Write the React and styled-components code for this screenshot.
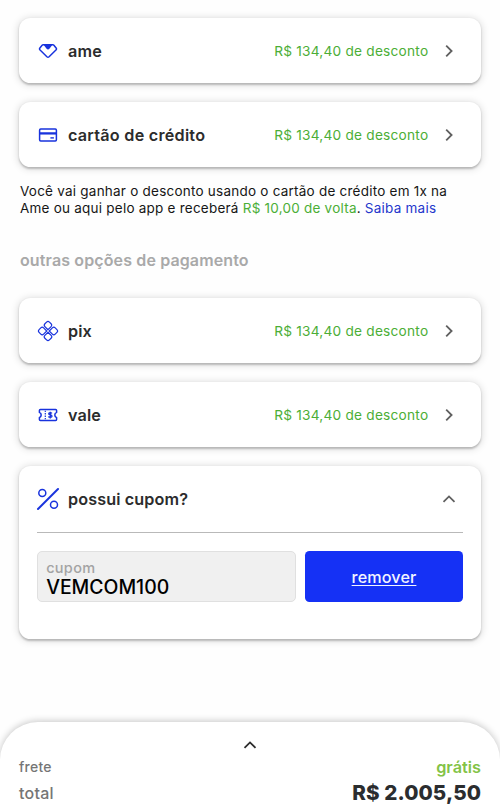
import React from 'react';
import styled, { createGlobalStyle } from 'styled-components';

const GlobalStyle = createGlobalStyle`
  *, *::before, *::after { box-sizing: border-box; }
  body {
    margin: 0;
    background: #fff;
    font-family: Inter, "Liberation Sans", sans-serif;
    color: #2c2c2c;
  }
`;

const Page = styled.div`
  display: flex;
  flex-direction: column;
  height: 807px;
  padding-top: 18px;
  overflow: hidden;
  background: #fefefe;
`;

const Content = styled.main`
  flex: 1;
  padding: 0 18.7px;
`;

const CardList = styled.div`
  display: flex;
  flex-direction: column;
  gap: 18.6px;
`;

const Card = styled.section`
  border-radius: 11.5px;
  background: #fff;
  box-shadow: 0 1.5px 2px rgba(0, 0, 0, 0.2), 0 1px 8px rgba(0, 0, 0, 0.18);
`;

const CouponCard = styled(Card)`
  height: 173.3px;
`;

const Row = styled.div`
  display: flex;
  align-items: center;
  height: 65.4px;
  padding: 0 25.7px 0 17.3px;
`;

const CouponHeader = styled(Row)`
  height: 66px;
`;

const IconSlot = styled.span`
  display: flex;
  justify-content: center;
  width: 24px;
  margin-right: 8px;
  color: #1933dd;
`;

const Label = styled.span`
  flex: 1;
  font-size: 16.2px;
  line-height: 20px;
  font-weight: 600;
  letter-spacing: ${(p) => p.$spacing || '0.12px'};
`;

const Discount = styled.span`
  margin-right: 13.3px;
  font-size: 13.7px;
  line-height: 20px;
  letter-spacing: 0.22px;
  color: #4bae36;
  white-space: nowrap;
`;

const Arrow = styled.svg`
  display: block;
  fill: none;
  stroke: ${(p) => p.$color || '#606060'};
  stroke-width: 1.8;
`;

const Notice = styled.p`
  margin: 16px 0 0 1.3px;
  font-size: 13.5px;
  line-height: 17px;
  letter-spacing: 0.23px;
  color: #161616;
  white-space: nowrap;
`;

const NoticeLine = styled.span`
  display: block;
`;

const Cashback = styled.span`
  color: #4bae36;
`;

const MoreLink = styled.a`
  color: #2437cc;
`;

const SectionTitle = styled.h2`
  margin: 33px 0 27.7px 1.3px;
  font-size: 16px;
  line-height: 20px;
  font-weight: 600;
  letter-spacing: 0.13px;
  color: #a9a9a9;
`;

const CouponForm = styled.div`
  display: flex;
  gap: 9px;
  margin: 0 18.3px;
  padding-top: 18.3px;
  border-top: 1px solid #b9b9b9;
`;

const CouponField = styled.div`
  display: flex;
  flex-direction: column;
  width: 259px;
  height: 51px;
  padding: 6.5px 8.2px 0;
  border: 1px solid #e0e0e0;
  border-radius: 5px;
  background: #f0f0f0;
`;

const FieldLabel = styled.span`
  font-size: 14.5px;
  line-height: 18px;
  font-weight: 500;
  letter-spacing: 0.3px;
  color: #a3a3a3;
`;

const FieldValue = styled.span`
  font-size: 19.4px;
  line-height: 20px;
  font-weight: 500;
  color: #000;
`;

const RemoveButton = styled.button`
  flex: 1;
  height: 51px;
  padding: 0;
  border: 0;
  border-radius: 4.5px;
  background: #1531f5;
  color: #f2f4ff;
  font: 500 16.2px/20px Inter, "Liberation Sans", sans-serif;
  letter-spacing: 0.1px;
  text-decoration: underline;
  text-decoration-thickness: 1.3px;
  text-underline-offset: 2px;
  text-decoration-skip-ink: none;
`;

const Summary = styled.footer`
  display: flex;
  flex-direction: column;
  height: 85.3px;
  padding: 16px 19px 0;
  border-radius: 38px 38px 0 0;
  background: #fff;
  box-shadow: 0 -1px 7px rgba(0, 0, 0, 0.22);
`;

const Handle = styled.div`
  display: flex;
  justify-content: center;
  height: 17px;
`;

const SummaryRow = styled.div`
  display: flex;
  align-items: center;
  justify-content: space-between;
  height: ${(p) => p.$height};
`;

const SummaryLabel = styled.span`
  font-size: ${(p) => p.$size};
  line-height: 20px;
  font-weight: 500;
  letter-spacing: 0.25px;
  color: #757575;
`;

const Shipping = styled.span`
  font-size: 16.3px;
  line-height: 20px;
  font-weight: 600;
  color: #83c346;
`;

const Total = styled.strong`
  font-size: 20.6px;
  line-height: 22px;
  font-weight: 800;
  letter-spacing: 0.08px;
  color: #2b2d2f;
`;

const AmeIcon = () => (
  <svg width="20" height="20" viewBox="0 0 20 20" fill="none">
    <path d="M5.2 3.8h9.6q.7 0 1.1.5l2.4 3q.6.8-.1 1.5l-7.1 7q-1.1 1-2.2 0l-7.1-7q-.7-.7-.1-1.5l2.4-3q.4-.5 1.1-.5Z" stroke="currentColor" strokeWidth="1.5" />
    <path d="M5.2 3.3h9.6L11.6 7.5q-1.6 1.9-3.2 0Z" fill="currentColor" />
  </svg>
);

const CardIcon = () => (
  <svg width="20" height="20" viewBox="0 0 20 20" fill="none">
    <rect x="1.6" y="4.1" width="16.8" height="11.8" rx="1.1" stroke="currentColor" strokeWidth="1.5" />
    <path d="M1.5 8.4h17" stroke="currentColor" strokeWidth="2.3" />
    <path d="M12.4 12.9h3.5" stroke="currentColor" strokeWidth="1.4" />
  </svg>
);

const PixIcon = () => (
  <svg width="22" height="22" viewBox="0 0 22 22" fill="none" stroke="currentColor" strokeWidth="1.2">
    <g transform="rotate(45 11 11)">
      <path d="M10.1 10.1H5.7q-2 0-2-2V5.7q0-2 2-2h2.4q2 0 2 2Z" />
      <path d="M11.9 10.1V5.7q0-2 2-2h2.4q2 0 2 2v2.4q0 2-2 2Z" />
      <path d="M10.1 11.9v4.4q0 2-2 2H5.7q-2 0-2-2v-2.4q0-2 2-2Z" />
      <path d="M11.9 11.9h4.4q2 0 2 2v2.4q0 2-2 2h-2.4q-2 0-2-2Z" />
    </g>
  </svg>
);

const VoucherIcon = () => (
  <svg width="20" height="20" viewBox="0 0 20 20" fill="none" stroke="currentColor">
    <path d="M2.4 4.6h15.2q1 0 1 1v1.8q-1.8.9-1.8 2.6t1.8 2.6v1.8q0 1-1 1H2.4q-1 0-1-1v-1.8Q3.2 11.7 3.2 10T1.4 7.4V5.6q0-1 1-1Z" strokeWidth="1.5" />
    <path d="M7.3 5.7v9" strokeWidth="1.2" strokeDasharray="1.4 1" />
    <path d="M14 8.4q-.6-.7-1.8-.7-1.5 0-1.5 1.1 0 .9 1.6 1.1 1.7.2 1.7 1.3 0 1.1-1.7 1.1-1.3 0-1.9-.8M12.3 6.7v6.7" strokeWidth="1.3" />
  </svg>
);

const PercentIcon = () => (
  <svg width="24" height="24" viewBox="0 0 24 24" fill="none" stroke="currentColor">
    <path d="M2 22 22 2" strokeWidth="2" strokeLinecap="round" />
    <circle cx="6.3" cy="6" r="3.5" strokeWidth="1.5" />
    <circle cx="18" cy="17.7" r="3.5" strokeWidth="1.5" />
  </svg>
);

const ChevronRight = () => (
  <Arrow width="14" height="14" viewBox="0 0 14 14">
    <path d="m4.2 1.6 5.4 5.4-5.4 5.4" />
  </Arrow>
);

const ChevronUp = ({ color }) => (
  <Arrow width="14" height="14" viewBox="0 0 14 14" $color={color}>
    <path d="M1.5 9.8 7 4.4l5.5 5.4" />
  </Arrow>
);

const PaymentOption = ({ icon, label, spacing }) => (
  <Card>
    <Row>
      <IconSlot>{icon}</IconSlot>
      <Label $spacing={spacing}>{label}</Label>
      <Discount>R$ 134,40 de desconto</Discount>
      <ChevronRight />
    </Row>
  </Card>
);

export default function App() {
  return (
    <>
      <GlobalStyle />
      <Page>
        <Content>
          <CardList>
            <PaymentOption icon={<AmeIcon />} label="ame" spacing="0.25px" />
            <PaymentOption icon={<CardIcon />} label="cartão de crédito" spacing="0.24px" />
          </CardList>
          <Notice>
            <NoticeLine>Você vai ganhar o desconto usando o cartão de crédito em 1x na</NoticeLine>
            <NoticeLine>
              Ame ou aqui pelo app e receberá <Cashback>R$ 10,00 de volta</Cashback>. <MoreLink>Saiba mais</MoreLink>
            </NoticeLine>
          </Notice>
          <SectionTitle>outras opções de pagamento</SectionTitle>
          <CardList>
            <PaymentOption icon={<PixIcon />} label="pix" />
            <PaymentOption icon={<VoucherIcon />} label="vale" />
            <CouponCard>
              <CouponHeader>
                <IconSlot><PercentIcon /></IconSlot>
                <Label>possui cupom?</Label>
                <ChevronUp />
              </CouponHeader>
              <CouponForm>
                <CouponField>
                  <FieldLabel>cupom</FieldLabel>
                  <FieldValue>VEMCOM100</FieldValue>
                </CouponField>
                <RemoveButton>remover</RemoveButton>
              </CouponForm>
            </CouponCard>
          </CardList>
        </Content>
        <Summary>
          <Handle><ChevronUp color="#2c2c2c" /></Handle>
          <SummaryRow $height="24px">
            <SummaryLabel $size="14px">frete</SummaryLabel>
            <Shipping>grátis</Shipping>
          </SummaryRow>
          <SummaryRow $height="27.6px">
            <SummaryLabel $size="16px">total</SummaryLabel>
            <Total>R$ 2.005,50</Total>
          </SummaryRow>
        </Summary>
      </Page>
    </>
  );
}
